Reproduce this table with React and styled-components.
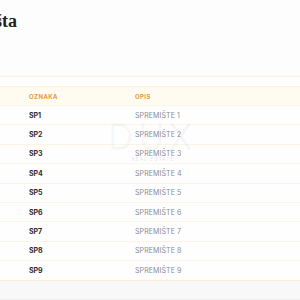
import React from 'react'
import styled, { createGlobalStyle } from 'styled-components'

const GlobalStyle = createGlobalStyle`
  html, body {
    margin: 0;
    padding: 0;
    background: #fdfdfd;
    overflow: hidden;
  }
`

const Page = styled.div`
  width: 300px;
  height: 300px;
  overflow: hidden;
  font-family: Inter, 'Noto Sans', sans-serif;
  position: relative;
`

const Header = styled.div`
  height: 77px;
  box-sizing: border-box;
  padding-top: 12px;
  border-bottom: 1px solid #fbf1dc;
`

/* title sits mostly off the left edge; its end lines up at ~17px */
const Title = styled.h1`
  margin: 0;
  width: 17px;
  display: flex;
  justify-content: flex-end;
  font-family: 'Liberation Serif', 'DejaVu Serif', serif;
  font-weight: 700;
  font-size: 18px;
  line-height: 18px;
  color: #1f1f24;
  white-space: nowrap;
`

const Toolbar = styled.div`
  height: 9px;
  background: #fefefe;
  border-bottom: 1px solid #fbf1dc;
`

const Row = styled.div`
  display: grid;
  grid-template-columns: 106px 1fr;
  align-items: center;
  padding-left: 29px;
  height: ${(p) => (p.$head ? '19px' : '19.4px')};
  box-sizing: border-box;
  background: ${(p) => (p.$head ? '#fffbf0' : '#fefefe')};
  border-bottom: 1px solid ${(p) => (p.$last ? '#f9ecd0' : '#fcf5e3')};
`

const HeadCell = styled.span`
  font-size: 6px;
  font-weight: 700;
  letter-spacing: 0.4px;
  color: #e59a3a;
`

const Code = styled.span`
  font-size: 7px;
  font-weight: 700;
  color: #2c2d35;
`

const Desc = styled.span`
  font-size: 7px;
  color: #8b8b92;
  letter-spacing: 0.1px;
`

const Footer = styled.div`
  height: 18px;
  background: #f8f8f8;
  border-bottom: 1px solid #efefef;
`

const Watermark = styled.div`
  position: absolute;
  left: 108px;
  top: 120px;
  width: 90px;
  text-align: center;
  pointer-events: none;
  line-height: 1;
`

const WatermarkBig = styled.div`
  font-size: 34px;
  font-weight: 200;
  letter-spacing: 6px;
  color: transparent;
  -webkit-text-stroke: 0.5px rgba(190, 190, 200, 0.35);
`

const WatermarkSmall = styled.div`
  font-size: 5px;
  letter-spacing: 1px;
  margin-top: 3px;
  color: rgba(170, 170, 180, 0.3);
`

const rows = Array.from({ length: 9 }, (_, i) => ({
  code: `SP${i + 1}`,
  desc: `SPREMIŠTE ${i + 1}`,
}))

export default function App() {
  return (
    <Page>
      <GlobalStyle />
      <Header>
        <Title>Spremišta</Title>
      </Header>
      <Toolbar />
      <Row $head>
        <HeadCell>OZNAKA</HeadCell>
        <HeadCell>OPIS</HeadCell>
      </Row>
      {rows.map((r, i) => (
        <Row key={r.code} $last={i === rows.length - 1}>
          <Code>{r.code}</Code>
          <Desc>{r.desc}</Desc>
        </Row>
      ))}
      <Footer />
      <Watermark>
        <WatermarkBig>DUX</WatermarkBig>
        <WatermarkSmall>REAL ESTATE</WatermarkSmall>
      </Watermark>
    </Page>
  )
}
